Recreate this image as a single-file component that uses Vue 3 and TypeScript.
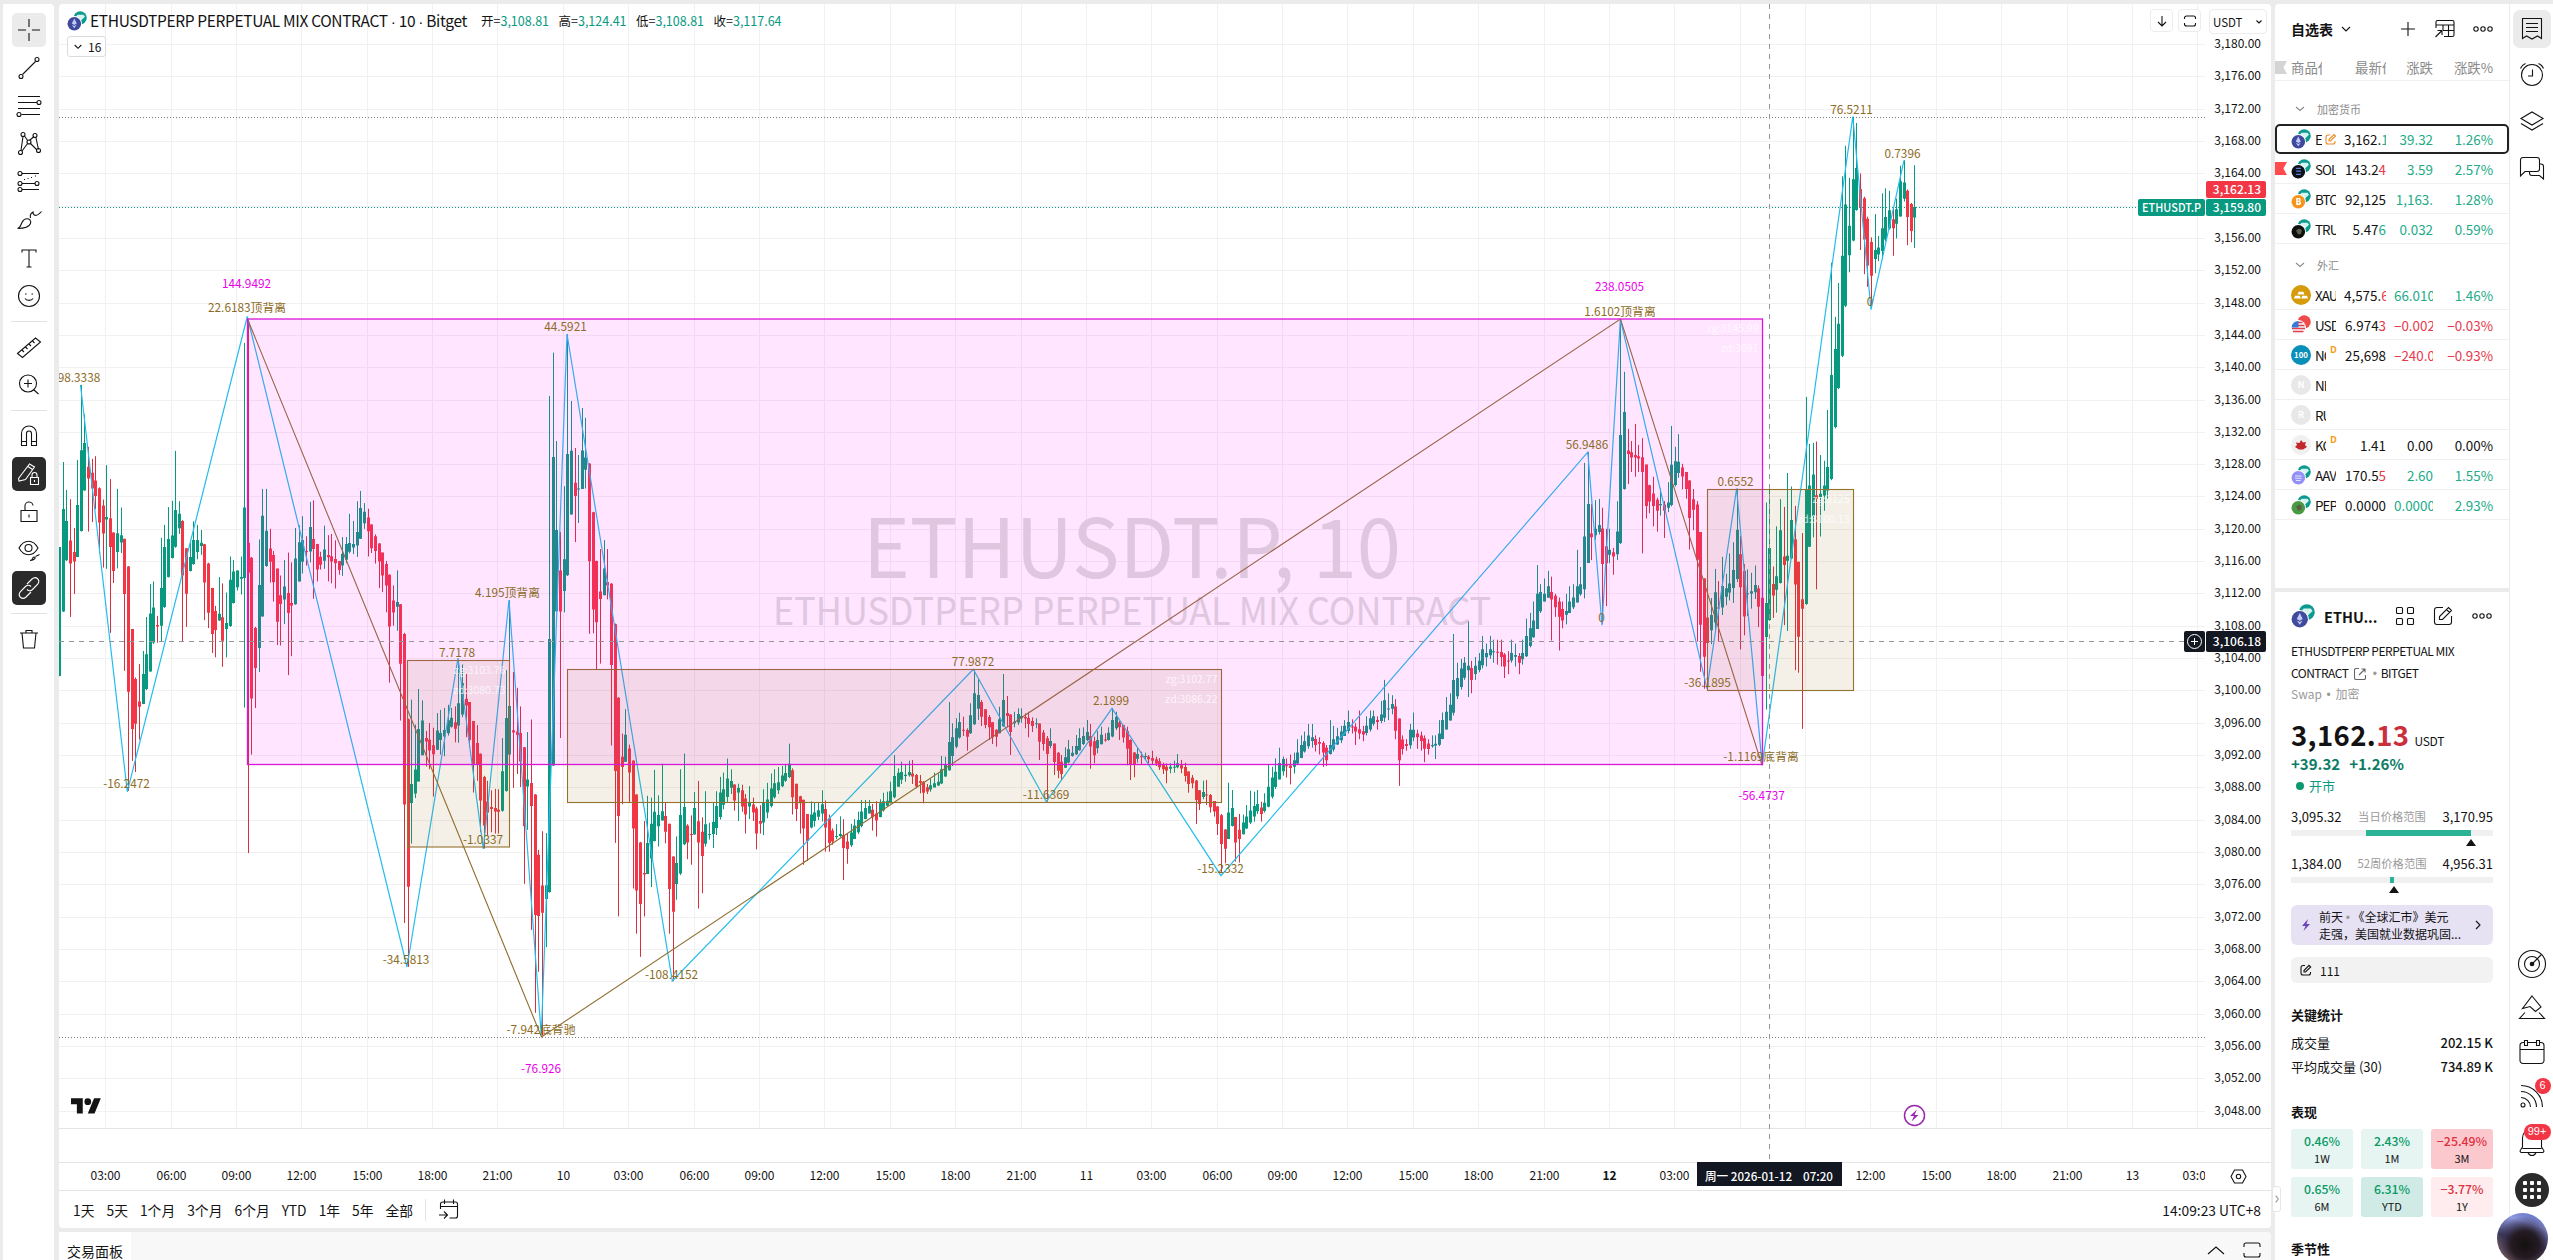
<template>
  <div class="app">
    <aside class="tools">
      <template v-for="(t, i) in tools" :key="i">
        <div v-if="t.sep" class="tool-sep"></div>
        <button v-else class="tool" :class="t.state">
          <svg width="28" height="28" viewBox="0 0 28 28"><path v-for="(d, k) in t.paths" :key="k" :d="d" /></svg>
        </button>
      </template>
    </aside>

    <main class="center">
      <section class="chart">
        <svg class="plot" width="2212" height="1187" viewBox="59 4 2212 1187">
          <g class="grid">
            <line v-for="p in prices" :key="p" x1="59" x2="2205" :y1="priceY(p)" :y2="priceY(p)" />
            <line v-for="(t, i) in times" :key="'t' + i" y1="4" y2="1128" :x1="timeX(i)" :x2="timeX(i)" />
          </g>
          <g class="frame">
            <line x1="59" x2="2271" y1="1128.5" y2="1128.5" />
            <line x1="59" x2="2271" y1="1162.5" y2="1162.5" />
            <line x1="59" x2="2271" y1="1190.5" y2="1190.5" />
          </g>
          <text class="mark big" x="863" y="578" textLength="538" lengthAdjust="spacingAndGlyphs">ETHUSDT.P, 10</text>
          <text class="mark" x="773" y="625" textLength="718" lengthAdjust="spacingAndGlyphs">ETHUSDTPERP PERPETUAL MIX CONTRACT</text>

          <line class="dots" x1="59" x2="2205" y1="117.5" y2="117.5" />
          <line class="dots" x1="59" x2="2205" y1="1037.5" y2="1037.5" />
          <line class="dots last-dots" x1="59" x2="2138" y1="207.5" y2="207.5" />

          <path class="wick up" :d="paths.upWick" />
          <path class="wick down" :d="paths.downWick" />
          <path class="up" :d="paths.upBody" />
          <path class="down" :d="paths.downBody" />

          <polyline class="stroke-line" :points="strokeLine" />
          <polyline class="segment-line" points="247.5,319 541.5,1037 1620.5,319 1762,765" />

          <rect v-for="(b, i) in boxes" :key="'b' + i" class="zone" :class="b.kind" :x="b.x" :y="b.y" :width="b.w" :height="b.h" />
          <template v-for="(b, i) in boxes" :key="'z' + i">
            <text class="zone-text" :x="b.x + b.w - 4" :y="b.y + 13">{{ b.zg }}</text>
            <text class="zone-text" :x="b.x + b.w - 4" :y="b.y + 33">{{ b.zd }}</text>
          </template>

          <text v-for="(l, i) in labels" :key="'l' + i" class="label" :class="{ pink: l[3] }" :x="l[0]" :y="l[1] + 4">{{ l[2] }}</text>

          <line class="cross" x1="59" x2="2184" y1="641.5" y2="641.5" />
          <line class="cross" x1="1769.5" x2="1769.5" y1="4" y2="1162" />

          <g class="event">
            <circle cx="1914.5" cy="1115.5" r="10" />
            <path d="M1917 1109.500l-7 6.500h4l-2.500 5.500 7-6.500h-4z" />
          </g>
          <g class="tv-logo" transform="translate(71 1095) scale(.84)">
            <path d="M14 22H7V11H0V4h14v18zM28 22h-8l7.500-18h8z" />
            <circle cx="20" cy="8" r="4" />
          </g>

          <g class="axis">
            <template v-for="p in prices" :key="p">
              <text v-if="p !== 3160" x="2261" :y="priceY(p) + 3.5" text-anchor="end">{{ money(p) }}</text>
            </template>
            <template v-for="(t, i) in times" :key="'x' + i">
              <text v-if="i !== 25 && i !== 26" :class="{ strong: t === '12' }" :x="timeX(i)" y="1179.500" text-anchor="middle">{{ t }}</text>
            </template>
            <rect x="2205" y="1164" width="20" height="25" fill="#fff" />
          </g>

          <g class="tag">
            <rect x="2206" y="181" width="60" height="17" rx="2" fill="#f23645" />
            <text x="2261" y="194" text-anchor="end">3,162.13</text>
            <rect x="2138" y="199" width="67" height="17" rx="2" fill="#089981" />
            <text x="2142" y="212" textLength="59" lengthAdjust="spacingAndGlyphs">ETHUSDT.P</text>
            <rect x="2206" y="199" width="60" height="17" rx="2" fill="#089981" />
            <text x="2261" y="211.500" text-anchor="end">3,159.80</text>
            <rect x="2184" y="631" width="21" height="21" rx="2" fill="#131722" />
            <rect x="2206" y="631" width="60" height="21" rx="2" fill="#131722" />
            <circle cx="2194.500" cy="641.500" r="7" />
            <path d="M2191 641.500h7M2194.500 638v7" />
            <text x="2261" y="645.500" text-anchor="end">3,106.18</text>
            <rect x="1697" y="1162" width="145" height="24" fill="#131722" />
            <text x="1705" y="1180.500" textLength="87" lengthAdjust="spacingAndGlyphs">周一 2026-01-12</text>
            <text x="1803" y="1180.500" textLength="30" lengthAdjust="spacingAndGlyphs">07:20</text>
          </g>
          <g class="gear">
            <path d="M2234.500 1170h8l3.500 6.500-3.500 6.500h-8l-3.500-6.500z" />
            <circle cx="2238.500" cy="1176.500" r="2.200" />
          </g>
        </svg>

        <div class="legend">
          <CoinIcon :size="20" front="#3f4a9c" glyph="eth" />
          <span class="legend-title">ETHUSDTPERP PERPETUAL MIX CONTRACT <s>·</s> 10 <s>·</s> Bitget</span>
          <span class="ohlc" v-for="o in ohlc" :key="o[0]">{{ o[0] }}=<b>{{ o[1] }}</b></span>
        </div>
        <div class="fold"><svg width="8" height="6" viewBox="0 0 8 6"><path d="M.7 1l3.300 3.300L7.300 1" /></svg>16</div>
        <div class="corner">
          <span class="mini"><svg width="14" height="14" viewBox="0 0 14 14"><path d="M7 2v10M3 8l4 4 4-4" /></svg></span>
          <span class="mini"><svg width="14" height="14" viewBox="0 0 14 14"><path d="M1.500 5V4a2 2 0 012-2h7a2 2 0 012 2v1M1.500 9v1a2 2 0 002 2h7a2 2 0 002-2V9" /></svg></span>
          <span class="mini unit">USDT<svg width="8" height="6" viewBox="0 0 8 6"><path d="M1.500 1.500L4 4l2.500-2.500" /></svg></span>
        </div>

        <div class="ranges">
          <span v-for="r in ranges" :key="r">{{ r }}</span>
          <i></i>
          <svg width="22" height="24" viewBox="0 0 22 24"><path d="M2.500 11V6a2 2 0 012-2h13a2 2 0 012 2v12a2 2 0 01-2 2h-6M2.500 8.500h17M6.500 1.500V6M15.500 1.500V6M1 17h8M6 13.500L9.500 17 6 20.500" /></svg>
          <span class="clock">14:09:23 UTC+8</span>
        </div>
      </section>
      <footer class="trade">
        <span class="trade-tab">交易面板</span>
        <svg width="20" height="14" viewBox="0 0 20 14"><path d="M2 11l8-7 8 7" /></svg>
        <svg width="20" height="18" viewBox="0 0 20 18"><path d="M2 6V4a2 2 0 012-2h12a2 2 0 012 2v2M2 12v2a2 2 0 002 2h12a2 2 0 002-2v-2" /></svg>
      </footer>
    </main>

    <aside class="panel">
      <section class="watch">
        <header class="watch-head">
          <b>自选表</b>
          <svg width="10" height="8" viewBox="0 0 10 8"><path d="M1 2l4 4 4-4" /></svg>
          <svg class="push" width="18" height="18" viewBox="0 0 18 18"><path d="M9 2v14M2 9h14" /></svg>
          <svg width="22" height="20" viewBox="0 0 22 20"><path d="M2 9V3a1.500 1.500 0 011.500-1.500h15A1.500 1.500 0 0120 3v13a1.500 1.500 0 01-1.500 1.500H10M2 6h18M9 11.500h11M9 6v5M14.500 6v11.500M1.500 18L8 11.500M3.500 11.500H8V16" /></svg>
          <svg width="22" height="8" viewBox="0 0 22 8"><circle cx="4" cy="4" r="2.200" /><circle cx="11" cy="4" r="2.200" /><circle cx="18" cy="4" r="2.200" /></svg>
        </header>
        <div class="row cols">
          <i class="flag"></i>
          <span class="sym wide">商品代</span><span class="last">最新价</span><span class="chg">涨跌</span><span class="pct">涨跌%</span>
        </div>
        <template v-for="g in groups" :key="g.name">
          <div class="group"><svg width="10" height="6" viewBox="0 0 10 6"><path d="M1 1l4 3.500L9 1" /></svg>{{ g.name }}</div>
          <div v-for="r in g.rows" :key="r.sym" class="row" :class="[r.dir, { active: r.active }]">
            <i v-if="r.flag" class="flag red"></i>
            <CoinIcon :size="20" :front="r.front" :back="r.back" :glyph="r.glyph" />
            <span class="sym" :class="{ short: r.mark || !r.last }">{{ r.sym }}</span>
            <sup v-if="r.mark === 'D'">D</sup>
            <svg v-if="r.mark === 'note'" class="note-mark" width="12" height="12" viewBox="0 0 12 12"><path d="M5 2H3a2 2 0 00-2 2v5a2 2 0 002 2h5a2 2 0 002-2V8M4 6.500L9 1.500l1.500 1.500-5 5H4z" /></svg>
            <span class="last">{{ r.last }}<em :class="{ lift: r.tailUp }">{{ r.tail }}</em></span>
            <span class="chg">{{ r.chg }}</span>
            <span class="pct">{{ r.pct }}</span>
          </div>
        </template>
      </section>

      <section class="detail">
        <header class="detail-head">
          <CoinIcon :size="24" front="#3f4a9c" glyph="eth" />
          <b>ETHU...</b>
          <svg width="20" height="20" viewBox="0 0 20 20"><path d="M2.500 1.500h4a1 1 0 011 1v4a1 1 0 01-1 1h-4a1 1 0 01-1-1v-4a1 1 0 011-1zM13.500 1.500h4a1 1 0 011 1v4a1 1 0 01-1 1h-4a1 1 0 01-1-1v-4a1 1 0 011-1zM2.500 12.500h4a1 1 0 011 1v4a1 1 0 01-1 1h-4a1 1 0 01-1-1v-4a1 1 0 011-1zM13.500 12.500h4a1 1 0 011 1v4a1 1 0 01-1 1h-4a1 1 0 01-1-1v-4a1 1 0 011-1z" /></svg>
          <svg width="20" height="20" viewBox="0 0 20 20"><path d="M10 1.500H4A2.500 2.500 0 001.500 4v12A2.500 2.500 0 004 18.500h12a2.500 2.500 0 002.500-2.500v-6M6.500 13.500v-3l9-9 3 3-9 9zM13.500 3.500l3 3" /></svg>
          <svg width="22" height="8" viewBox="0 0 22 8"><circle cx="4" cy="4" r="2.200" /><circle cx="11" cy="4" r="2.200" /><circle cx="18" cy="4" r="2.200" /></svg>
        </header>
        <div class="name">ETHUSDTPERP PERPETUAL MIX</div>
        <div class="name">CONTRACT <svg width="12" height="12" viewBox="0 0 12 12"><path d="M5 .5H2A1.500 1.500 0 00.5 2v8A1.500 1.500 0 002 11.500h8a1.500 1.500 0 001.500-1.500V7M5 7l6-6M7.500 1H11v3.500" /></svg> <s>•</s> BITGET</div>
        <div class="kind">Swap <s>•</s> 加密</div>
        <div class="price">3,162.<em>13</em><small>USDT</small></div>
        <div class="delta"><span>+39.32</span><span>+1.26%</span></div>
        <div class="open"><i></i>开市</div>
        <div v-for="g in gauges" :key="g.title" class="gauge">
          <div class="gauge-text"><span>{{ g.low }}</span><small>{{ g.title }}</small><span>{{ g.high }}</span></div>
          <div class="bar"><i :style="{ marginLeft: g.from + 'px', width: g.width + 'px' }"></i></div>
          <div class="arrow" :style="{ marginLeft: g.from + g.width - 5 + 'px' }"></div>
        </div>
        <div class="news">
          <svg width="8" height="12" viewBox="0 0 8 12"><path d="M6 0L0 7h3.500L1.500 12 8 5H4.500z" /></svg>
          <div><p>前天 <s>•</s> 《全球汇市》美元</p><p>走强，美国就业数据巩固...</p></div>
          <svg class="next" width="6" height="10" viewBox="0 0 6 10"><path d="M1 1l4 4-4 4" /></svg>
        </div>
        <div class="memo">
          <svg width="12" height="12" viewBox="0 0 12 12"><path d="M5 1.500H3a2 2 0 00-2 2V9a2 2 0 002 2h5.500a2 2 0 002-2V8M4 8V6.500L9 1.300l1.700 1.700L5.500 8z" /></svg>111
        </div>
        <h4>关键统计</h4>
        <div class="stat"><span>成交量</span><b>202.15 K</b></div>
        <div class="stat"><span>平均成交量 (30)</span><b>734.89 K</b></div>
        <h4 class="perf-title">表现</h4>
        <div class="perf">
          <div v-for="p in perf" :key="p.label" class="tile" :class="p.tone"><b>{{ p.value }}</b><span>{{ p.label }}</span></div>
        </div>
        <h4>季节性</h4>
      </section>
      <div class="handle"><svg width="4" height="8" viewBox="0 0 4 8"><path d="M.7 .7L3.300 4 .7 7.300" /></svg></div>
    </aside>

    <aside class="side">
      <button class="side-btn on"><svg width="24" height="24" viewBox="0 0 24 24"><path d="M2.500 1.500h19v20l-4-2.500-5.500 3-5.500-3-4 2.500zM6 6.500h12M6 10.500h12M6 14.500h12" /></svg></button>
      <button class="side-btn"><svg width="26" height="26" viewBox="0 0 26 26"><circle cx="13" cy="14" r="10.500" /><path d="M13.500 8.500v6.500H9M1.500 7.500c1-2.500 2.500-4 5-5M24.500 7.500c-1-2.500-2.500-4-5-5" /></svg></button>
      <button class="side-btn"><svg width="26" height="26" viewBox="0 0 26 26"><path d="M2 10.500L13 4l11 6.500L13 17zM2 15.500L13 22l11-6.500" /></svg></button>
      <button class="side-btn"><svg width="26" height="26" viewBox="0 0 26 26"><path d="M4 2.500h14a2.500 2.500 0 012.500 2.500v9a2.500 2.500 0 01-2.500 2.500H6L1.500 21V5A2.500 2.500 0 014 2.500zM20.500 9H22a2.500 2.500 0 012.500 2.500V24l-4-3.500H13A2.500 2.500 0 0110.500 18v-1.500" /></svg></button>
      <div class="side-gap"></div>
      <button class="side-low"><svg width="30" height="30" viewBox="0 0 30 30"><circle cx="15" cy="15" r="13.500" /><circle cx="15" cy="15" r="7.500" /><circle cx="15" cy="15" r="1.800" fill="#111" /><path d="M15 15l9.500-9.500" /></svg></button>
      <button class="side-low"><svg width="30" height="30" viewBox="0 0 30 30"><path d="M15 3l9 11-5.500 4.500-5.500-5-7.500 2zM8 19.500L2.500 25.500h25L22 19.500" /></svg></button>
      <button class="side-low"><svg width="30" height="30" viewBox="0 0 30 30"><path d="M6 5.500h18a3 3 0 013 3v15a3 3 0 01-3 3H6a3 3 0 01-3-3v-15a3 3 0 013-3zM3 12.500h24" /><path fill="#fff" d="M7.500 3.500h3v5h-3zM19.500 3.500h3v5h-3z" /></svg></button>
      <button class="side-low"><svg width="30" height="30" viewBox="0 0 30 30"><circle cx="6" cy="24" r="2" /><path d="M4 16.500a9.500 9.500 0 019.500 9.500M4 10.500a15.500 15.500 0 0115.500 15.500M4 4.500a21.500 21.500 0 0121.500 21.500" /></svg><u>6</u></button>
      <button class="side-low bell"><svg width="30" height="30" viewBox="0 0 30 30"><path d="M5.500 20V11a9.500 9.500 0 0119 0v9l2 3a1.500 1.500 0 01-1 2.500h-21a1.500 1.500 0 01-1-2.500zM5.500 21.500h19M11 25.500c1.500 4 6.500 4 8 0" /></svg><u class="wide">99+</u></button>
      <button class="apps"><i v-for="n in 9" :key="n"></i></button>
      <div class="orb"></div>
    </aside>
  </div>
</template>

<script setup lang="ts">
import { h } from 'vue'

interface Segment {
  top: number
  scale: number
  bars: string
}

interface Row {
  sym: string
  last?: string
  tail?: string
  tailUp?: boolean
  chg?: string
  pct?: string
  dir?: string
  front: string
  back?: string | null
  glyph: string
  mark?: string
  flag?: boolean
  active?: boolean
}

const glyphs: Record<string, [string, string]> = {
  eth: ['M7.300 7.500l-2.500 5 2.500 1.500 2.500-1.500zM4.800 13.700l2.500 3.500 2.500-3.500-2.500 1.400z', '#c3caf5'],
  sol: ['M4.500 10h5l1-1.300h-5zM4.500 11.500h5l1 1.300h-5zM4.500 16h5l1-1.300h-5z', '#5d7dd8'],
  btc: ['M5.200 9h2.500c2.500 0 2.500 2.600 1 3.200 2 .3 1.800 3.800-.8 3.800H5.200zM6.700 10.300v1.400h1.500v-1.400zM6.700 13v1.600h1.600V13z', '#fff'],
  dot: ['M5 11.500l3-2 3 1.500-1 4-3 .5z', '#5c5c48'],
  gold: ['M7.600 6.800h4.800l1 2.800H6.600zM4 10.800h4.800l1 2.800H3zM11.200 10.800H16l1 2.800h-6.800z', '#fff'],
  leaf: ['M10 5l2 2.500 3-.5-1 3 2 2-4 2.500H8L4 12l2-2-1-2.500 3.500.5z', '#c1272d'],
  face: ['M4 10.500h6.600v1H4zM4 12.700h6.600v1H4zM5 14.900h4.600v1H5z', '#e4e3ff'],
}

// one coin, or a quote coin tucked behind the base coin
const CoinIcon = (p: { size: number; front: string; back?: string | null; glyph: string }) => {
  const kids = []
  const single = p.back === null
  if (!single) {
    kids.push(h('circle', { cx: 13.2, cy: 6.8, r: 6.6, fill: p.back || '#0c9a90' }))
    if (!p.back) kids.push(h('path', { d: 'M10.500 3.800h6l1.500 2-4.500 4.300L9 5.800z', fill: '#d5f3ef' }))
    kids.push(h('circle', { cx: 7.3, cy: 12.7, r: 7.6, fill: '#fff' }))
  }
  const c = single ? { cx: 10, cy: 10, r: 10 } : { cx: 7.3, cy: 12.7, r: 6.8 }
  kids.push(h('circle', { ...c, fill: p.front }))
  if (p.glyph === 'us') {
    kids.push(h('path', { d: 'M7 7.500h4.500M7 10.500h6.500M1 13.500h13M2 16.500h10.500', stroke: '#e2414b', 'stroke-width': 1.5 }))
    kids.push(h('path', { d: 'M.6 12.500A6.800 6.800 0 017.500 6v6.500z', fill: '#3a78d6' }))
  } else if (glyphs[p.glyph]) {
    kids.push(h('path', { d: glyphs[p.glyph][0], fill: glyphs[p.glyph][1] }))
  } else if (p.glyph) {
    kids.push(h('text', { x: 10, y: p.glyph.length > 1 ? 12.8 : 13.3, 'text-anchor': 'middle', 'font-size': p.glyph.length > 1 ? 7.8 : 9, 'font-weight': 700, fill: '#fff' }, p.glyph))
  }
  return h('svg', { class: 'coin', width: p.size, height: p.size, viewBox: '0 0 20 20' }, kids)
}
CoinIcon.props = ['size', 'front', 'back', 'glyph']

const tools: { sep?: boolean; state?: string; paths?: string[] }[] = [
  { state: 'on', paths: ['M14 3v8M14 17v8M3 14h8M17 14h8'] },
  { paths: ['M7.500 20.500L20.500 7.500', 'M4 22.500a2 2 0 104 0 2 2 0 10-4 0M20 5.500a2 2 0 104 0 2 2 0 10-4 0'] },
  { paths: ['M3 4.500h22M3 10.500h19M3 16.500h22M6.500 22.500H25', 'M22 10.500a2 2 0 104 0 2 2 0 10-4 0M2 22.500a2 2 0 104 0 2 2 0 10-4 0'] },
  { paths: ['M6 20.500L8 6.500M9.500 6L13 11M15 13l7 7M14.500 10.500L19 6.500M21 8l2.500 11.500M7 21l6-8', 'M6 4.500a2 2 0 104 0 2 2 0 10-4 0M18 5.500a2 2 0 104 0 2 2 0 10-4 0M12 12a2 2 0 104 0 2 2 0 10-4 0M3.500 22.500a2 2 0 104 0 2 2 0 10-4 0M21.500 20.500a2 2 0 104 0 2 2 0 10-4 0'] },
  { paths: ['M7 5.500h17M7 15.500h13M7 21.500h17', 'M9 11.500h1M12.500 10.500h1M16 9.500h1M20 8h1', 'M3 5.500a2 2 0 104 0 2 2 0 10-4 0M3 15.500a2 2 0 104 0 2 2 0 10-4 0M3 21.500a2 2 0 104 0 2 2 0 10-4 0M20 15.500a2 2 0 104 0 2 2 0 10-4 0'] },
  { paths: ['M2.500 22.500c4 0 3-8 8-9.500 4-1 6 2 5 4.500-1.500 4-6 5-13 5zM15.500 12C14.500 8 18 6 18 6c0 3 3 6 8.500-.500'] },
  { paths: ['M7 8.500V6h14v2.500M14 6v17M11.500 23h5'] },
  { paths: ['M3.500 14a10.500 10.500 0 1021 0 10.500 10.500 0 10-21 0', 'M10 12h1.500M16.500 12H18M10 16.500c1.500 2.500 6.500 2.500 8 0'] },
  { sep: true },
  { paths: ['M2.500 20.500l18-15.500L25.500 9l-18 15.500zM7 17l2 2M10.500 14l2 2M14 11l2 2M17.500 8l2 2'] },
  { paths: ['M4.500 12.500a8.500 8.500 0 1017 0 8.500 8.500 0 10-17 0M19 19l4.500 4M13 8.500v8M9 12.500h8'] },
  { sep: true },
  { paths: ['M6.500 23.500v-12a7.500 7.500 0 0115 0v12h-5v-12a2.500 2.500 0 00-5 0v12zM6.500 19.500h5M16.500 19.500h5'] },
  { state: 'dark', paths: ['M3.500 18.500L14.500 4l5 3-9 12.500-6.500 1.500zM13 6.500l4.500 3M15.500 17.500h8v7h-8zM17 17.500v-2.500a2.500 2.500 0 015 0v2.500M19.500 20v2'] },
  { paths: ['M6 12.500h16v11H6zM10 12.500V8.500a4 4 0 018-1M14 16.500v3'] },
  { paths: ['M4 12c5-9 14-9 19 0-5 9-14 9-19 0z', 'M10 12a3.500 3.500 0 107 0 3.500 3.500 0 10-7 0M15 24.500c3 0 2-3 4-3.500 2 0 2 3-4 3.500zM20.500 20.500l4-2'] },
  { state: 'dark', paths: ['M12 10l5-5c4-3.500 9 1 5.500 5.500l-5 5c-1.500 1.500-4 1.500-5.500 0M16 18l-5 5c-4 3.500-9-1-5.500-5.500l5-5c1.500-1.500 4-1.500 5.500 0'] },
  { sep: true },
  { paths: ['M5 8h18M11 8V5.500h6V8M7 8l1.500 15h11L21 8'] },
]

const prices = Array.from({ length: 34 }, (_, i) => 3180 - i * 4)
const priceY = (p: number) => Math.round(44 + (3180 - p) * 8.08) + 0.5
const money = (p: number) => `${Math.floor(p / 1000)},${String(p % 1000).padStart(3, '0')}.00`

const hours = ['03:00', '06:00', '09:00', '12:00', '15:00', '18:00', '21:00']
const times = [...hours, '10', ...hours, '11', ...hours, '12', ...hours, '13', '03:00']
const timeX = (i: number) => Math.round(105.2 + i * 65.38) + 0.5

const ohlc = [['开', '3,108.81'], ['高', '3,124.41'], ['低', '3,108.81'], ['收', '3,117.64']]
const ranges = ['1天', '5天', '1个月', '3个月', '6个月', 'YTD', '1年', '5年', '全部']

// Heikin Ashi bars, "close high low"; every open is the middle of the bar before
const segments: Segment[] = [
  { top: 360, scale: 0.3954, bars: `473 473 800,377 258 637,407 329 508,515 352 650,510 425 592,367 253 498,228 63 434,210 137 330,300 220 434,325 250 410,344 243 377,411 322 488,439 353 525,397 266 528,473 301 690,534 436 564,438 326 527,443 373 488,592 453 786,839 521 1090,933 680 1014,920 803 1042,877 769 960,794 736 869,744 650 835,641 567 788,626 560 718,674 647 715,577 450 711,473 417 627,453 372 550,444 356 502,379 230 475,389 357 440,545 405 711,591 478 675,498 462 535,455 408 518,455 417 504,462 430 493,563 465 658,639 513 678,693 576 741,683 622 752,642 549 660,710 565 776,665 588 752,556 497 675,535 506 616,532 532 583,549 497 593,373 -43 879,538 -100 1247,856 498 998,779 675 880,569 454 789,394 326 649,432 326 523,510 427 563,562 483 611,662 534 721,617 545 722,573 506 668,640 487 797,621 512 749,502 425 619,461 418 560,455 395 540,485 446 520,422 359 512,478 355 604,530 465 560,518 485 530,479 419 528,499 443 560,510 440 565,514 456 578,531 508 543,490 448 546,465 448 514,463 389 489,465 407 491,435 357 498,374 331 452,384 362 427,433 376 497,476 416 488,483 441 515,510 463 577,545 487 587,570 508 638,674 542 816,639 570 672,612 532 685,768 617 912,1124 690 1424,1332 907 1535,1072 859 1223,1036 922 1108,933 832 1054,912 861 996,965 938 1028,988 918 1035,997 930 1104,937 893 986,943 885 998,936 880 1002,911 872 950,905 880 930` },
  { top: 320, scale: 0.4656, bars: `878 830 907,823 733 908,780 740 853,828 760 896,902 822 918,955 862 1015,955 870 990,1032 931 1100,1086 979 1135,1058 990 1108,1050 1010 1100,1056 1007 1103,1056 1008 1103,969 898 1056,855 752 1013,829 602 937,886 756 1005,891 790 975,948 830 1003,1087 917 1211,987 885 1095,1044 858 1310,1278 1018 1488,1280 1138 1400,1273 1098 1537,1214 1102 1347,685 163 1230,294 70 958,451 260 627,626 455 898,514 357 628,288 30 550,281 174 418,378 275 477,362 290 436,280 189 363,295 210 362,518 308 674,622 412 673,649 517 751,599 492 738,534 473 591,570 492 600,741 565 914,969 652 1123,1065 810 1281,960 888 1040,891 836 948,972 912 1035,1092 946 1221,1225 1019 1318,1254 1121 1368,1191 1076 1281,1123 1022 1190,1082 1026 1218,1056 966 1120,1063 1021 1131,1055 953 1074,1099 1036 1124,1222 1091 1318,1271 1158 1420,1166 1109 1245,1063 965 1192,1046 931 1128,1122 1083 1158,1106 1064 1170,1048 1014 1105,1122 990 1264,1151 1068 1231,1083 1012 1131,1104 1080 1116,1078 1036 1134,1044 1012 1106,1015 981 1073,1008 972 1051,985 942 1035,990 965 1018,1032 1003 1054,1005 996 1076,1045 998 1056,1062 1018 1103,1036 1001 1072,1058 1026 1076,1103 1045 1137,1082 1042 1103,1036 1008 1106,1030 994 1070,1006 974 1047,995 965 1028,993 960 1018,978 958 1003,973 955 992,953 910 984,1025 963 1062,1050 997 1076,1038 1022 1103,1092 1036 1170,1119 1064 1162,1062 1034 1092,1058 1037 1088,1053 1036 1074,1040 1010 1077,1090 1032 1142,1123 1062 1142,1120 1092 1127,1108 1083 1115,1104 1066 1111,1134 1072 1203,1136 1102 1168,1101 1082 1132,1086 1072 1115,1074 1056 1104` },
  { top: 640, scale: 0.3333, bars: `515 480 562,504 480 538,498 480 520,532 492 572,542 484 590,490 478 532,484 458 515,482 455 500,454 425 490,408 345 475,398 385 440,396 365 432,404 375 425,396 362 410,410 360 432,440 402 445,428 405 460,458 424 490,455 432 462,436 415 455,430 398 442,425 400 438,388 348 432,372 350 410,306 186 392,292 250 378,265 235 325,246 218 296,270 230 288,290 265 332,226 190 282,160 88 255,165 115 240,230 180 258,255 208 265,262 225 300,292 247 312,290 268 320,238 200 280,180 102 260,228 168 262,276 223 345,245 215 262,222 205 255,228 205 248,236 220 265,252 215 292,258 232 276,250 235 265,305 252 360,312 270 332,342 288 485,303 265 325,366 312 405,392 336 415,402 345 420,352 322 384,328 300 370,338 318 350,318 285 345,294 265 332,288 262 315,276 240 303,320 252 386,346 290 370,300 272 340,284 260 313,302 280 305,278 262 302,240 205 292,230 215 270,262 242 300,292 256 308,326 260 376,375 298 420,375 336 412,342 322 368,352 335 375,348 338 360,358 345 370,362 332 372,370 350 378,382 354 390,388 368 402,392 370 430,380 370 400,380 362 398,370 342 385,386 360 400,408 368 425,432 394 458,430 405 445,480 420 552,492 450 510,456 422 478,466 420 495,502 462 518,515 484 530,552 498 585,612 522 700,626 568 670,518 428 597,504 450 560,608 531 665,597 522 668,548 524 582,530 495 567,512 452 552,498 455 545,492 450 522,522 485 545,488 460 518,440 375 502` },
  { top: 280, scale: 0.3827, bars: `1300 1272 1355,1285 1250 1330,1262 1222 1302,1252 1245 1295,1270 1250 1300,1275 1240 1318,1255 1235 1290,1235 1200 1265,1215 1190 1240,1205 1180 1235,1190 1160 1225,1195 1160 1222,1215 1190 1232,1212 1195 1240,1235 1205 1272,1255 1215 1270,1215 1150 1240,1200 1165 1232,1192 1170 1215,1180 1165 1210,1165 1150 1190,1155 1125 1185,1168 1148 1185,1180 1158 1215,1185 1125 1200,1188 1165 1205,1165 1140 1190,1145 1125 1180,1140 1125 1165,1155 1140 1175,1135 1100 1158,1098 1045 1155,1120 1080 1150,1108 1085 1135,1178 1095 1200,1255 1148 1322,1225 1190 1240,1218 1200 1230,1175 1160 1225,1175 1130 1205,1195 1175 1225,1205 1180 1230,1225 1190 1260,1225 1200 1240,1215 1190 1222,1212 1190 1252,1185 1150 1218,1150 1130 1200,1128 1090 1175,1110 1080 1150,1045 925 1138,1040 1000 1095,1015 990 1070,1000 985 1045,1008 892 1090,1045 995 1080,1008 985 1045,995 975 1025,965 930 1015,975 950 1010,965 930 990,970 940 1000,972 940 1005,985 940 1010,1010 975 1040,995 970 1030,975 940 1000,980 950 1010,1000 975 1030,975 940 1005,930 885 985,910 870 960,890 840 935,820 745 910,815 795 870,820 780 840,800 760 830,835 775 942,855 820 880,880 830 968,890 840 910,865 820 900,840 800 870,830 795 860,800 705 840,795 750 825,670 478 832,585 450 732,672 585 732,650 575 680,640 572 665,742 595 898,740 650 852,705 650 740,722 700 770,657 578 732,405 103 690,345 240 548` },
  { top: 60, scale: 0.4847, bars: `813 761 875,820 786 850,820 751 860,822 794 850,850 780 1018,920 849 946,911 876 935,920 860 962,930 903 973,916 884 940,930 910 986,913 871 933,835 755 921,828 798 880,829 772 862,859 833 886,885 850 905,945 867 1010,928 885 970,1031 910 1200,1165 974 1262,1231 1070 1297,1203 1149 1297,1145 1110 1205,1098 1050 1180,1130 1075 1200,1085 1025 1145,1090 1060 1125,1080 1018 1115,1052 995 1120,969 884 1077,1088 982 1216,1148 1040 1187,1100 1051 1147,1096 1058 1132,1083 1043 1112,1128 1084 1170,1271 1110 1455,1120 913 1340,1007 882 1157,1105 1045 1151,1065 962 1140,970 906 1080,1042 922 1166,1023 852 1178,949 880 1030,1082 920 1259,1190 1036 1264,1132 976 1380,886 695 1124,878 792 1005,855 790 985,905 787 1092,895 815 983,878 827 930,840 722 905,650 418 867,596 530 760,544 460 679,404 240 613,298 177 510,342 243 438,246 117 374,223 130 311,304 234 392,370 282 442,424 323 468,445 366 508,392 318 440,387 363 415,347 275 410,324 265 374,310 270 350,347 305 404,308 286 368,250 218 322,253 207 292,324 267 382,353 295 376,303 217 388` },
]

function buildCandles() {
  const out = { upWick: '', downWick: '', upBody: '', downBody: '' }
  let open = 676
  let i = 0
  for (const s of segments) {
    for (const bar of s.bars.split(',')) {
      const [close, high, low] = bar.split(' ').map((v) => s.top + Number(v) * s.scale)
      const x = Math.round(59 + i * 3.631)
      const up = close <= open
      const top = Math.min(open, close)
      const size = Math.max(1, Math.abs(open - close))
      const hi = Math.min(high, top)
      const lo = Math.max(low, top + size)
      out[up ? 'upWick' : 'downWick'] += `M${x + 0.5} ${hi.toFixed(1)}V${lo.toFixed(1)}`
      out[up ? 'upBody' : 'downBody'] += `M${x - 1} ${top.toFixed(1)}h3v${size.toFixed(1)}h-3z`
      open = (open + close) / 2
      i++
    }
  }
  return out
}
const paths = buildCandles()

const strokeLine =
  '80.5,385 127.3,791.8 247.3,316.5 407,967 458,658 483.3,849 509,600 541.3,1035.6 567,334 672.3,981 973.3,669.3 1046.3,801.7 1112,708.3 1221,875.7 1587.8,452.2 1602,625.2 1620.4,319.4 1707,688.7 1736.6,488.5 1762.2,765.2 1852.8,116.7 1871,309.6 1904,160.3'

const boxes = [
  { kind: 'brown', x: 407.5, y: 660.5, w: 102, h: 186.5, zg: 'zg:3103.76', zd: 'zd:3080.73' },
  { kind: 'brown', x: 567.5, y: 669.5, w: 654, h: 133, zg: 'zg:3102.77', zd: 'zd:3086.22' },
  { kind: 'brown', x: 1707.5, y: 489.5, w: 146, h: 201, zg: 'zg:3125', zd: 'zd:3100.13' },
  { kind: 'magenta', x: 247.5, y: 319, w: 1515, h: 445.5, zg: 'zg:3145.99', zd: 'zd:3091' },
]

const labels: [number, number, string, boolean?][] = [
  [79, 377.5, '98.3338'],
  [246.5, 284, '144.9492', true],
  [247, 308, '22.6183顶背离'],
  [565.5, 327, '44.5921'],
  [507.5, 593, '4.195顶背离'],
  [457, 652.5, '7.7178'],
  [126.5, 784, '-16.2472'],
  [483, 840, '-1.0337'],
  [406, 960, '-34.5813'],
  [671.5, 975, '-108.4152'],
  [541, 1030, '-7.942底背驰'],
  [541, 1069, '-76.926', true],
  [973, 662, '77.9872'],
  [1111, 701, '2.1899'],
  [1046, 795, '-11.6369'],
  [1220.5, 869, '-15.2332'],
  [1587, 445, '56.9486'],
  [1601.5, 618, '0'],
  [1619.5, 286.5, '238.0505', true],
  [1620, 311.5, '1.6102顶背离'],
  [1735.5, 481.5, '0.6552'],
  [1707.5, 683, '-36.1895'],
  [1761, 757, '-1.1169底背离'],
  [1761.5, 796, '-56.4737', true],
  [1851.5, 109.5, '76.5211'],
  [1870, 302, '0'],
  [1902.5, 153.5, '0.7396'],
]

const groups: { name: string; rows: Row[] }[] = [
  {
    name: '加密货币',
    rows: [
      { sym: 'ETH', last: '3,162.', tail: '1', tailUp: true, chg: '39.32', pct: '1.26%', dir: 'gain', front: '#3f4a9c', glyph: 'eth', mark: 'note', active: true },
      { sym: 'SOL', last: '143.2', tail: '4', chg: '3.59', pct: '2.57%', dir: 'gain', front: '#0d1018', glyph: 'sol', flag: true },
      { sym: 'BTC', last: '92,125', chg: '1,163.', pct: '1.28%', dir: 'gain', front: '#f7931a', glyph: 'btc' },
      { sym: 'TRU', last: '5.47', tail: '6', tailUp: true, chg: '0.032', pct: '0.59%', dir: 'gain', front: '#0f0f0f', glyph: 'dot' },
    ],
  },
  {
    name: '外汇',
    rows: [
      { sym: 'XAU', last: '4,575.', tail: '6', chg: '66.010', pct: '1.46%', dir: 'gain', front: '#d59b0a', back: null, glyph: 'gold' },
      { sym: 'USD', last: '6.974', tail: '3', chg: '−0.002', pct: '−0.03%', dir: 'loss', front: '#f4f6fa', back: '#ee4b4b', glyph: 'us' },
      { sym: 'NQ', last: '25,698', chg: '−240.0', pct: '−0.93%', dir: 'loss', front: '#0a8fb8', back: null, glyph: '100', mark: 'D' },
      { sym: 'NI', front: '#e8e8e8', back: null, glyph: 'N' },
      { sym: 'RU', front: '#e8e8e8', back: null, glyph: 'R' },
      { sym: 'KC', last: '1.41', chg: '0.00', pct: '0.00%', front: '#f0f0f0', back: null, glyph: 'leaf', mark: 'D' },
      { sym: 'AAV', last: '170.5', tail: '5', chg: '2.60', pct: '1.55%', dir: 'gain', front: '#9391f7', glyph: 'face' },
      { sym: 'PEP', last: '0.0000', chg: '0.0000', pct: '2.93%', dir: 'gain', front: '#4a9a43', glyph: 'dot' },
    ],
  },
]

const gauges = [
  { low: '3,095.32', title: '当日价格范围', high: '3,170.95', from: 75, width: 105 },
  { low: '1,384.00', title: '52周价格范围', high: '4,956.31', from: 99, width: 4 },
]

const perf = [
  { value: '0.46%', label: '1W', tone: 'g1' },
  { value: '2.43%', label: '1M', tone: 'g1' },
  { value: '−25.49%', label: '3M', tone: 'r2' },
  { value: '0.65%', label: '6M', tone: 'g1' },
  { value: '6.31%', label: 'YTD', tone: 'g2' },
  { value: '−3.77%', label: '1Y', tone: 'r1' },
]
</script>

<style>
body {
  overflow: hidden;
}
</style>

<style scoped>
.app {
  display: flex;
  width: 2553px;
  height: 1260px;
  padding: 4px 0 0 3px;
  box-sizing: border-box;
  background: #ebebeb;
  overflow: hidden;
  font-family: "Noto Sans CJK SC", sans-serif;
  font-size: 13px;
  color: #131313;
}

.app * {
  box-sizing: border-box;
}

svg {
  flex: none;
  fill: none;
  stroke: #131313;
  stroke-width: 1.1;
}

svg text {
  stroke: none;
}

svg.coin {
  stroke: none;
}

button {
  border: none;
  background: none;
  padding: 0;
}

em,
s {
  font-style: normal;
  text-decoration: none;
}

/* left toolbar */
.tools {
  width: 51px;
  padding-top: 9px;
  background: #fff;
  border-radius: 0 4px 0 0;
  display: flex;
  flex-direction: column;
  align-items: center;
  gap: 4px;
}

.tool {
  width: 34px;
  height: 34px;
  flex: none;
  border-radius: 5px;
  display: flex;
  align-items: center;
  justify-content: center;
}

.tool.on {
  background: #ebebeb;
}

.tool.dark {
  background: #2b2b2b;
}

.tool.dark svg {
  stroke: #fff;
}

.tool-sep {
  width: 36px;
  height: 1px;
  margin: 4px 0;
  background: #e2e2e2;
}

/* chart */
.center {
  width: 2212px;
  margin-left: 5px;
  display: flex;
  flex-direction: column;
  gap: 4px;
}

.chart {
  position: relative;
  height: 1225px;
  background: #fff;
  border-radius: 4px;
  overflow: hidden;
}

.plot {
  display: block;
}

.grid line {
  stroke: #f1f1f1;
  stroke-width: 1;
}

.frame line {
  stroke: #e4e4e4;
  stroke-width: 1;
}

.mark {
  font-size: 38.5px;
  fill: #dcdedd;
}

.mark.big {
  font-size: 82px;
}

.dots {
  stroke: #7b7b7b;
  stroke-dasharray: 1 2;
  stroke-width: 1;
}

.last-dots {
  stroke: #089981;
}

.wick {
  stroke-width: 1;
}

.wick.up {
  stroke: #089981;
}

.wick.down {
  stroke: #d63040;
}

path.up:not(.wick) {
  stroke: none;
  fill: #089981;
}

path.down:not(.wick) {
  stroke: none;
  fill: #f23645;
}

.stroke-line {
  stroke: #22bdee;
  stroke-width: 1.2;
}

.segment-line {
  stroke: #8f6f2f;
  stroke-width: 1.1;
}

.zone.brown {
  fill: rgba(145, 110, 30, 0.1);
  stroke: #94712c;
}

.zone.magenta {
  fill: rgba(255, 0, 255, 0.1);
  stroke: #d818d8;
  stroke-width: 1.3;
}

.zone-text {
  font-size: 10.5px;
  fill: #fff;
  opacity: 0.75;
  text-anchor: end;
}

.label {
  font-size: 11.8px;
  fill: #8c6c26;
  text-anchor: middle;
}

.label.pink {
  fill: #ea00ea;
}

.cross {
  stroke: #949494;
  stroke-width: 1;
  stroke-dasharray: 5 5;
}

.event circle {
  stroke: #9c27b0;
  stroke-width: 1.5;
  fill: #fff;
}

.event path {
  fill: #9c27b0;
  stroke: none;
}

.tv-logo * {
  fill: #131313;
  stroke: none;
}

.axis text {
  font-size: 12px;
  fill: #131313;
}

.axis rect {
  stroke: none;
}

.axis .strong {
  font-weight: 700;
}

.tag rect {
  stroke: none;
}

.tag text {
  font-size: 12px;
  font-weight: 500;
  fill: #fff;
}

.tag circle,
.tag path {
  stroke: #fff;
  stroke-width: 1;
}

.legend {
  position: absolute;
  left: 8px;
  top: 5px;
  height: 24px;
  display: flex;
  align-items: center;
  white-space: nowrap;
  line-height: 24px;
}

.legend-title {
  width: 391px;
  margin-left: 3px;
  font-size: 15.5px;
  letter-spacing: -0.35px;
}

.legend-title s,
.name s,
.kind s,
.news s {
  font-family: "Liberation Sans", sans-serif;
}

.ohlc {
  width: 77.5px;
  font-size: 12.5px;
}

.ohlc b {
  font-weight: 400;
  color: #089981;
}

.fold {
  position: absolute;
  left: 8px;
  top: 32px;
  width: 39px;
  height: 21px;
  padding-left: 6px;
  border: 1px solid #dcdcdc;
  border-radius: 3px;
  background: #fff;
  display: flex;
  align-items: center;
  gap: 6px;
  font-size: 12px;
}

.corner {
  position: absolute;
  left: 2091px;
  top: 5px;
  display: flex;
  gap: 5px;
}

.mini {
  width: 23px;
  height: 23px;
  border: 1px solid #ececec;
  border-radius: 4px;
  background: #fff;
  display: flex;
  align-items: center;
  justify-content: center;
}

.mini.unit {
  width: 58px;
  height: 25px;
  margin-left: 3px;
  padding: 0 3px;
  justify-content: space-between;
  font-size: 11.5px;
}

.ranges {
  height: 38px;
  padding: 0 10px 0 14px;
  display: flex;
  align-items: center;
  gap: 12px;
  font-size: 13.8px;
}

.ranges i {
  width: 1px;
  height: 22px;
  background: #e4e4e4;
}

.clock {
  margin-left: auto;
}

.trade {
  height: 28px;
  background: #f8f8f8;
  border-radius: 4px 4px 0 0;
  display: flex;
  align-items: center;
  gap: 16px;
  padding-right: 9px;
}

.trade svg {
  margin-top: 8px;
}

.trade-tab {
  width: 72px;
  height: 28px;
  padding: 9px 0 0 8px;
  margin-right: auto;
  background: #fff;
  line-height: 20px;
  font-size: 14px;
}

/* watchlist and symbol details */
.panel {
  position: relative;
  width: 234px;
  margin-left: 4px;
  display: flex;
  flex-direction: column;
  gap: 4px;
}

.watch {
  height: 584px;
  flex: none;
  background: #fff;
  border-radius: 4px 0 0 0;
}

.watch-head {
  height: 50px;
  padding: 0 15px 0 16px;
  display: flex;
  align-items: center;
  gap: 8px;
  font-size: 14px;
}

.watch-head .push {
  margin-left: auto;
}

.watch-head svg + svg:not(.push) {
  margin-left: 8.5px;
}

.row {
  position: relative;
  height: 30px;
  padding: 0 16px;
  border-bottom: 1px solid #f0f0f0;
  display: flex;
  align-items: center;
  font-size: 13.4px;
  line-height: 20px;
  white-space: nowrap;
}

.row.active {
  border: 2px solid #222;
  border-radius: 5px;
  padding: 0 14px;
}

.row.cols {
  height: 27px;
  color: #8a8a8a;
  font-size: 13.4px;
}

.flag {
  position: absolute;
  left: 0;
  top: 7px;
  width: 12px;
  height: 13px;
  background: #d4d4d4;
  clip-path: polygon(0 0, 100% 0, 70% 50%, 100% 100%, 0 100%);
}

.flag.red {
  top: 8px;
  background: #ff4a50;
}

.sym {
  width: 21px;
  margin-left: 4px;
  overflow: hidden;
  letter-spacing: -0.9px;
}

.sym.short {
  width: 11px;
}

.active .sym.short {
  width: 7px;
}

.sym.wide {
  width: 31px;
  margin-left: 0;
  letter-spacing: 0;
}

.row sup {
  width: 8px;
  margin: -12px 0 0 4px;
  color: #f59e1b;
  font-size: 9.5px;
  font-weight: 700;
  line-height: 12px;
}

.note-mark {
  stroke: #f08a24;
  margin-left: 3px;
}

.last {
  position: absolute;
  right: 123px;
  max-width: 42px;
  overflow: hidden;
}

.cols .last {
  max-width: 31px;
}

.active .last {
  right: 121px;
}

.last em {
  color: #e8384c;
}

.last em.lift {
  color: #22ab87;
}

.chg {
  position: absolute;
  right: 76px;
  max-width: 39px;
  overflow: hidden;
}

.pct {
  position: absolute;
  right: 16px;
}

.active .chg {
  right: 74px;
}

.active .pct {
  right: 14px;
}

.gain .chg,
.gain .pct {
  color: #22ab87;
}

.loss .chg,
.loss .pct {
  color: #e8384c;
}

.group {
  height: 30px;
  margin-top: 6px;
  padding-left: 20px;
  display: flex;
  align-items: center;
  gap: 12px;
  font-size: 11px;
  color: #8a8a8a;
}

.group svg {
  stroke: #8a8a8a;
}

.cols + .group {
  height: 29px;
  margin-top: 13px;
  margin-bottom: 1px;
}

.detail {
  flex: 1;
  padding: 0 16px;
  background: #fff;
  overflow: hidden;
}

.detail-head {
  height: 48px;
  display: flex;
  align-items: center;
  font-size: 14.5px;
}

.detail-head b {
  width: 72px;
  margin-left: 9px;
}

.detail-head svg + svg {
  margin-left: 18px;
}

.name {
  height: 22px;
  line-height: 21px;
  font-size: 12px;
  letter-spacing: -0.5px;
  white-space: nowrap;
}

.name svg {
  margin: 0 3px -2px;
  stroke: #666;
}

.name s {
  margin: 0 2px;
}

.name s,
.news s {
  color: #9a9a9a;
}

.kind {
  height: 20px;
  line-height: 20px;
  font-size: 12px;
  color: #9a9a9a;
}

.kind s {
  margin: 0 2px;
}

.price {
  height: 36px;
  margin-top: 12px;
  margin-bottom: 1px;
  line-height: 36px;
  font-size: 27.5px;
  font-weight: 700;
  letter-spacing: 0.4px;
}

.price em {
  color: #cc2f3c;
}

.price small {
  margin-left: 5px;
  font-size: 12px;
  font-weight: 400;
  letter-spacing: -0.3px;
}

.delta {
  height: 22px;
  margin-top: 1px;
  display: flex;
  gap: 9px;
  line-height: 21px;
  font-size: 15px;
  font-weight: 700;
  color: #0b7d66;
}

.open {
  height: 22px;
  padding-left: 5px;
  display: flex;
  align-items: center;
  gap: 5px;
  line-height: 20px;
  color: #089981;
  margin-bottom: 9px;
}

.open i {
  width: 8px;
  height: 8px;
  border-radius: 50%;
  background: #089970;
}

.gauge {
  height: 47px;
}

.gauge-text {
  height: 20px;
  display: flex;
  align-items: center;
  justify-content: space-between;
}

.gauge-text small {
  font-size: 11.3px;
  color: #9a9a9a;
}

.bar {
  height: 6px;
  margin-top: 4px;
  background: #f0f0f0;
  border-radius: 1px;
}

.bar i {
  display: block;
  height: 6px;
  background: #2ab395;
}

.arrow {
  width: 10px;
  height: 7px;
  margin-top: 3px;
  background: #131313;
  clip-path: polygon(50% 0, 100% 100%, 0 100%);
}

.news {
  height: 40px;
  margin-top: 5px;
  padding: 0 12px 0 11px;
  border-radius: 6px;
  background: #e7e1f4;
  display: flex;
  align-items: center;
  gap: 9px;
  font-size: 12px;
}

.news p {
  margin: 0;
  line-height: 16px;
  white-space: nowrap;
}

.news div {
  width: 147px;
}

.news svg {
  fill: #6a45b8;
  stroke: none;
}

.news .next {
  fill: none;
  stroke: #131313;
}

.memo {
  height: 26px;
  margin-top: 12px;
  padding-left: 9px;
  border-radius: 6px;
  background: #f2f2f2;
  display: flex;
  align-items: center;
  gap: 8px;
  font-size: 12px;
}

h4 {
  height: 24px;
  margin: 20px 0 4px;
  line-height: 23px;
  font-size: 13px;
}

h4.perf-title {
  margin: 21px 0 5px;
}

.stat {
  height: 24px;
  display: flex;
  justify-content: space-between;
  line-height: 23px;
}

.stat b {
  font-weight: 500;
}

.perf {
  display: grid;
  grid-template-columns: repeat(3, 62px);
  gap: 8px;
}

.tile {
  height: 40px;
  padding-top: 4px;
  border-radius: 3px;
  text-align: center;
  font-size: 11px;
  line-height: 17px;
}

.tile b {
  display: block;
  font-size: 12.3px;
  font-weight: 500;
}

.g1 {
  background: #e6f5f2;
}

.g2 {
  background: #d0ebe5;
}

.g1 b,
.g2 b {
  color: #089965;
}

.r1 {
  background: #feecee;
}

.r2 {
  background: #fbc8cd;
}

.r1 b,
.r2 b {
  color: #e0303f;
}

.handle {
  position: absolute;
  left: -3px;
  top: 1182px;
  width: 9px;
  height: 26px;
  border: 1px solid #e6e6e6;
  border-radius: 3px;
  background: #fff;
  display: flex;
  align-items: center;
  justify-content: center;
}

.handle svg {
  stroke: #999;
}

/* right toolbar */
.side {
  position: relative;
  flex: 1;
  padding-top: 6px;
  margin-left: 1px;
  background: #fff;
  display: flex;
  flex-direction: column;
  align-items: center;
}

.side-btn {
  width: 38px;
  height: 38px;
  margin-bottom: 9px;
  flex: none;
  border-radius: 7px;
  display: flex;
  align-items: center;
  justify-content: center;
}

.side-btn.on {
  margin-bottom: 7px;
  background: #ebebeb;
}

.side-gap {
  height: 746px;
}

.side-low {
  position: relative;
  width: 38px;
  height: 44px;
  flex: none;
  display: flex;
  align-items: center;
  justify-content: center;
}

.side-low.bell {
  height: 48px;
}

.side-low u {
  position: absolute;
  right: 0;
  top: 4px;
  width: 16px;
  height: 16px;
  border-radius: 8px;
  background: #f23645;
  color: #fff;
  font-size: 11px;
  font-weight: 500;
  line-height: 15px;
  text-align: center;
  text-decoration: none;
}

.side-low u.wide {
  top: 6px;
  width: 27px;
}

.apps {
  width: 34px;
  height: 34px;
  margin-top: 7px;
  flex: none;
  border-radius: 50%;
  background: #2a2a2a;
  display: grid;
  grid-template-columns: repeat(3, 4px);
  gap: 3px;
  place-content: center;
}

.apps i {
  width: 4px;
  height: 4px;
  border-radius: 1px;
  background: #fff;
}

.orb {
  position: absolute;
  left: -13px;
  top: 1209px;
  width: 51px;
  height: 51px;
  border-radius: 50%;
  background:
    radial-gradient(circle at 55% 62%, #15110f 0, rgba(33, 24, 30, 0.95) 32%, rgba(50, 40, 70, 0.5) 52%, transparent 68%),
    linear-gradient(200deg, #4f5fb8 0, #8f9ae0 25%, #3c3a5c 55%, #b98a6c 100%);
}
</style>
